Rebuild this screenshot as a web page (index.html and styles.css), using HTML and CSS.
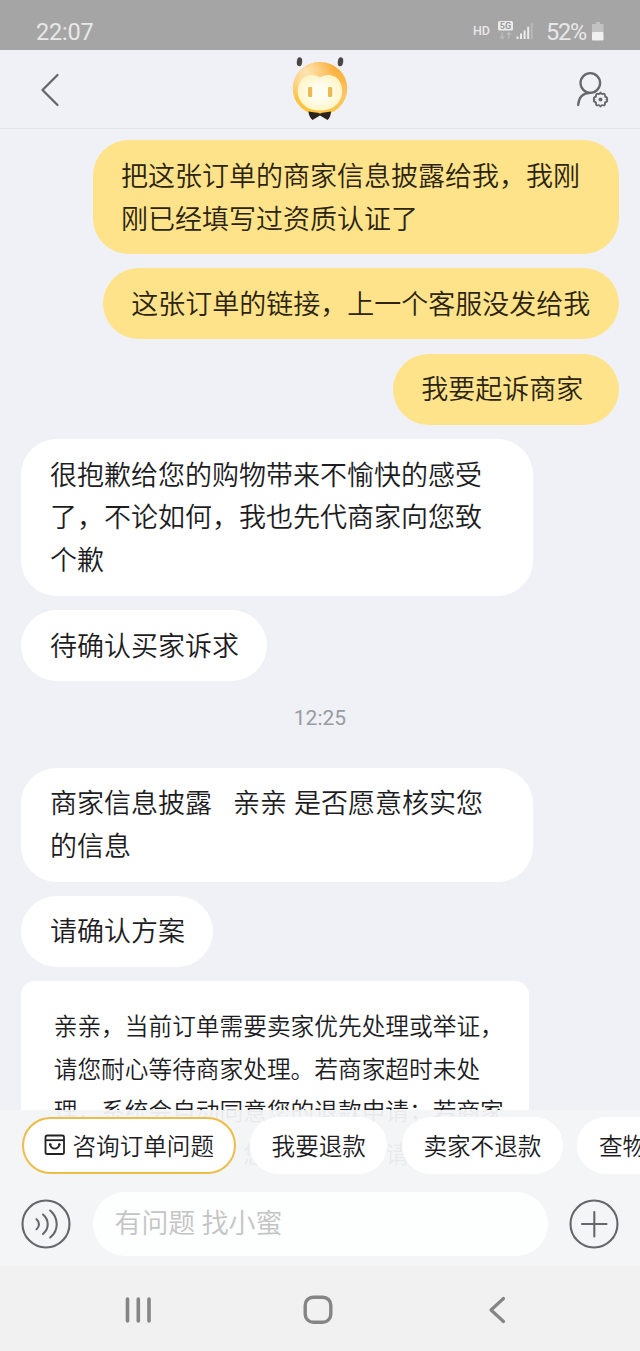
FILE: index.html
```html
<!DOCTYPE html>
<html lang="zh-CN">
<head>
<meta charset="utf-8">
<title>客服</title>
<link rel="stylesheet" href="styles.css">
</head>
<body>
<div class="phone">
  <div class="status">
    <span class="clock">22:07</span>
    <span class="hd">HD</span>
    <svg class="signal" width="36" height="22" viewBox="0 0 36 22">
      <rect x="0" y="1" width="15" height="9.5" rx="1.5" fill="#ececec"/>
      <text x="7.5" y="9.2" class="five-g">5G</text>
      <path d="M4.2 12.5v6M2 16.5l2.2 2.2 2.2-2.2M10.8 18.7v-6M8.6 14.7l2.2-2.2 2.2 2.2" fill="none" stroke="#bdbdbd" stroke-width="1.3"/>
      <path d="M19.5 16.5v2.5M23 13.5v5.5M26.6 10.5v8.500M30.200 6.800v12.200" stroke="#ececec" stroke-width="2"/>
      <path d="M33.700 3v16" stroke="#b9b9b9" stroke-width="1.800"/>
    </svg>
    <span class="percent">52%</span>
    <svg class="battery" width="12" height="19" viewBox="0 0 12 19">
      <path d="M4 0h4v2h3.500v8H0V2h4z" fill="#c2c2c2"/>
      <rect x="0" y="10" width="11.500" height="8.500" rx=".8" fill="#f0f0f0"/>
    </svg>
  </div>

  <div class="header">
    <svg class="back" width="20" height="34" viewBox="0 0 20 34"><path d="M17.500 2 2.500 17l15 15" fill="none" stroke="#66676a" stroke-width="2.300" stroke-linecap="round" stroke-linejoin="round"/></svg>
    <svg class="avatar" width="60" height="66" viewBox="0 0 60 66">
      <defs>
        <linearGradient id="head" x1=".7" y1="0" x2=".35" y2="1">
          <stop offset="0" stop-color="#f9ad35"/><stop offset=".5" stop-color="#fcc566"/><stop offset="1" stop-color="#f9c43c"/>
        </linearGradient>
        <radialGradient id="face" cx=".5" cy=".5" r=".6">
          <stop offset=".3" stop-color="#fffdf0"/><stop offset="1" stop-color="#fff3bd"/>
        </radialGradient>
        <radialGradient id="shine" cx=".25" cy=".2" r=".5">
          <stop offset="0" stop-color="#fde5b4"/><stop offset="1" stop-color="#fde5b4" stop-opacity="0"/>
        </radialGradient>
      </defs>
      <ellipse cx="9.500" cy="5.800" rx="2.700" ry="4.500" fill="#4d4743" transform="rotate(5 9.500 5.800)"/>
      <ellipse cx="50.500" cy="5.800" rx="2.700" ry="4.500" fill="#4d4743" transform="rotate(8 50.500 5.800)"/>
      <ellipse cx="30" cy="32.500" rx="27.300" ry="26.500" fill="url(#head)"/>
      <ellipse cx="30" cy="32.500" rx="27.300" ry="26.500" fill="url(#shine)"/>
      <path d="M30 21.500c4-3 10-3.500 15-1 8 5 9.500 18 3.500 26-5 6-11 8-18.500 8s-13.500-2-18.500-8c-6-8-4.500-21 3.500-26 5-2.500 11-2 15 1z" fill="url(#face)"/>
      <rect x="18" y="31" width="4.200" height="10" rx="1.200" fill="#edb951"/>
      <rect x="38" y="31" width="4.200" height="10" rx="1.200" fill="#edb951"/>
      <path d="M18.500 55.500 29 57l1 1 1-1 10-1.500c0 3.500-1.500 7-3.500 8.500L30 59.500 22.500 64c-2-1.500-4-5-4-8.500z" fill="#29231c"/>
    </svg>
    <svg class="profile" width="36" height="38" viewBox="0 0 36 38">
      <g fill="none" stroke="#67686b" stroke-width="2.300" stroke-linecap="round">
        <circle cx="16.300" cy="12" r="9.800"/>
        <path d="M4.200 34c.4-7 4.200-12 12.100-12.200"/>
        <path stroke-width="1.900" stroke-linejoin="round" d="M26.500 21.600q1.200 1.800 2.400 1.200 2.100-.5 2.100 1.600-.3 1.500 1.500 1.900 1.500 1.200 0 2.200 1.500 1.100 0 2.300-1.800.4-1.500 1.900 0 2.100-2.100 1.600-1.200-.6-2.400 1.200-1.200-1.800-2.400-1.200-2.100.5-2.100-1.600.3-1.500-1.500-1.900-1.500-1.200 0-2.300-1.500-1 0-2.200 1.800-.4 1.500-1.900 0-2.100 2.100-1.600 1.200.6 2.400-1.200z"/>
      </g>
      <circle cx="26.500" cy="28.500" r="2" fill="#67686b"/>
    </svg>
  </div>

  <div class="chat">
    <div class="bubble mine wide">把这张订单的商家信息披露给我，我刚<br>刚已经填写过资质认证了</div>
    <div class="bubble mine">这张订单的链接，上一个客服没发给我</div>
    <div class="bubble mine trailing">我要起诉商家</div>
    <div class="bubble full">很抱歉给您的购物带来不愉快的感受<br>了，不论如何，我也先代商家向您致<br>个歉</div>
    <div class="bubble">待确认买家诉求</div>
    <div class="time">12:25</div>
    <div class="bubble full spaced">商家信息披露   亲亲 是否愿意核实您<br>的信息</div>
    <div class="bubble">请确认方案</div>
    <div class="card">亲亲，当前订单需要卖家优先处理或举证，<br>请您耐心等待商家处理。若商家超时未处<br>理，系统会自动同意您的退款申请；若商家<br>拒绝您的申请了，您可以在此申请客服介入</div>
  </div>

  <div class="dock">
    <div class="chips">
      <div class="chip active">
        <svg width="22" height="22" viewBox="0 0 22 22"><g fill="none" stroke="#222" stroke-width="1.800"><rect x="1.500" y="1.500" width="18.500" height="18.500" rx="1.800"/><path d="M1.500 6.200H20"/><path d="M6 10.500c1.500 5.500 8 5.500 9.500 0" stroke-linecap="round"/></g><circle cx="6.300" cy="10.500" r="1.300" fill="#222"/><circle cx="15.300" cy="10.500" r="1.300" fill="#222"/></svg>
        <span>咨询订单问题</span>
      </div>
      <div class="chip">我要退款</div>
      <div class="chip">卖家不退款</div>
      <div class="chip">查物流</div>
    </div>
    <div class="composer">
      <svg width="50" height="50" viewBox="0 0 50 50"><g fill="none" stroke="#66676a" stroke-width="2.100" stroke-linecap="round"><circle cx="25" cy="25" r="23.500"/><path d="M15.500 20.200c3.300 2.800 3.300 7.200 0 10M22 15.500c6.300 5.500 6.300 14 0 19.500M29.200 11.500c8.700 7.500 8.700 20 0 27"/></g></svg>
      <div class="input">有问题 找小蜜</div>
      <svg width="50" height="50" viewBox="0 0 50 50"><g fill="none" stroke="#66676a" stroke-width="2.100" stroke-linecap="round"><circle cx="25" cy="25" r="23.500"/><path d="M13 25h24.500M25.300 13v24.500"/></g></svg>
    </div>
  </div>

  <div class="nav">
    <svg width="28" height="28" viewBox="0 0 28 28"><path d="M3.500 3v22M14.300 3v22M25 3v22" stroke="#858585" stroke-width="3.600" stroke-linecap="round"/></svg>
    <svg class="home" width="30" height="30" viewBox="0 0 30 30"><rect x="2.200" y="2.200" width="25.600" height="25" rx="8" fill="none" stroke="#858585" stroke-width="3.400"/></svg>
    <svg width="18" height="28" viewBox="0 0 18 28"><path d="M15.500 2.500 3 14l12.500 11.500" fill="none" stroke="#858585" stroke-width="3.200" stroke-linecap="round" stroke-linejoin="round"/></svg>
  </div>
</div>
</body>
</html>
```

FILE: styles.css
```css
* { box-sizing: border-box; }
body {
  margin: 0;
  font-family: Roboto, "Noto Sans CJK SC", sans-serif;
  font-weight: 350;
  color: #1d1d1f;
}
svg { display: block; flex: none; }
.phone {
  width: 640px;
  height: 1351px;
  display: flex;
  flex-direction: column;
  overflow: hidden;
  background: #eff1f6;
}
.status {
  flex: none;
  height: 50px;
  display: flex;
  align-items: center;
  padding: 13px 36px 0;
  background: #a5a5a5;
  color: #e8e8e8;
  font-weight: 400;
  font-size: 23.5px;
}
.clock { flex: 1; letter-spacing: -.2px; }
.hd { font-size: 12.500px; font-weight: 500; margin: -3px 8px 0 0; }
.signal { margin: -2px 12px 0 0; }
.five-g { font: 700 9px Roboto, sans-serif; text-anchor: middle; fill: #999; }
.percent { width: 42px; margin-right: 4px; letter-spacing: -1.2px; }
.battery { margin-top: -1px; }
.header {
  flex: none;
  height: 79px;
  display: flex;
  align-items: center;
  justify-content: space-between;
  padding: 1px 30.500px 0 40px;
  border-bottom: 1px solid #e4e6ea;
}
.avatar { margin: -1px 0 0 7px; }
.chat {
  flex: none;
  height: 1060px;
  display: flex;
  flex-direction: column;
  align-items: flex-start;
  gap: 14.400px;
  padding: 11.400px 21.500px 0 21.400px;
  overflow: hidden;
}
.bubble {
  flex: none;
  padding: 15.500px 28.200px 12.800px 28.600px;
  border-radius: 35.500px;
  background: #fff;
  font-size: 27px;
  line-height: 42.700px;
  white-space: pre;
}
.mine { align-self: flex-end; background: #ffe38b; color: #2b2410; }
.wide { width: 526px; }
.full { width: 512px; }
.spaced { word-spacing: .4px; }
.bubble.trailing { padding-right: 35.200px; }
.time {
  flex: none;
  align-self: center;
  height: 58px;
  line-height: 46px;
  font-size: 21px;
  font-weight: 400;
  color: #999ba0;
}
.card {
  flex: none;
  width: 508px;
  height: 220px;
  padding: 24.800px 0 0 32.300px;
  border-radius: 14px;
  background: #fff;
  font-size: 23.700px;
  line-height: 42.500px;
  white-space: nowrap;
}
.dock {
  position: relative;
  flex: none;
  height: 156px;
  margin-top: -79px;
  padding-top: 7px;
  background: rgba(243, 244, 246, .95);
}
.chips { display: flex; gap: 14.500px; padding-left: 21.500px; }
.chip {
  flex: none;
  display: flex;
  align-items: center;
  height: 57px;
  padding: 0 21.500px 1px;
  border-radius: 29px;
  background: #fff;
  font-size: 23.600px;
}
.active { gap: 7px; padding: 0 19.500px 1px 20px; border: 2px solid #ecbd49; }
.composer { display: flex; align-items: center; justify-content: space-between; padding: 18px 21px 0; }
.input {
  width: 455px;
  height: 64px;
  padding-left: 22px;
  border-radius: 32px;
  background: #fdfefe;
  font-size: 26.900px;
  line-height: 64px;
  color: #c4c4c4;
}
.nav {
  flex: none;
  height: 85px;
  display: flex;
  align-items: center;
  justify-content: space-between;
  padding: 3px 134px 0 124px;
  background: #f1f1f1;
}
.home { margin-right: 5px; }
```
